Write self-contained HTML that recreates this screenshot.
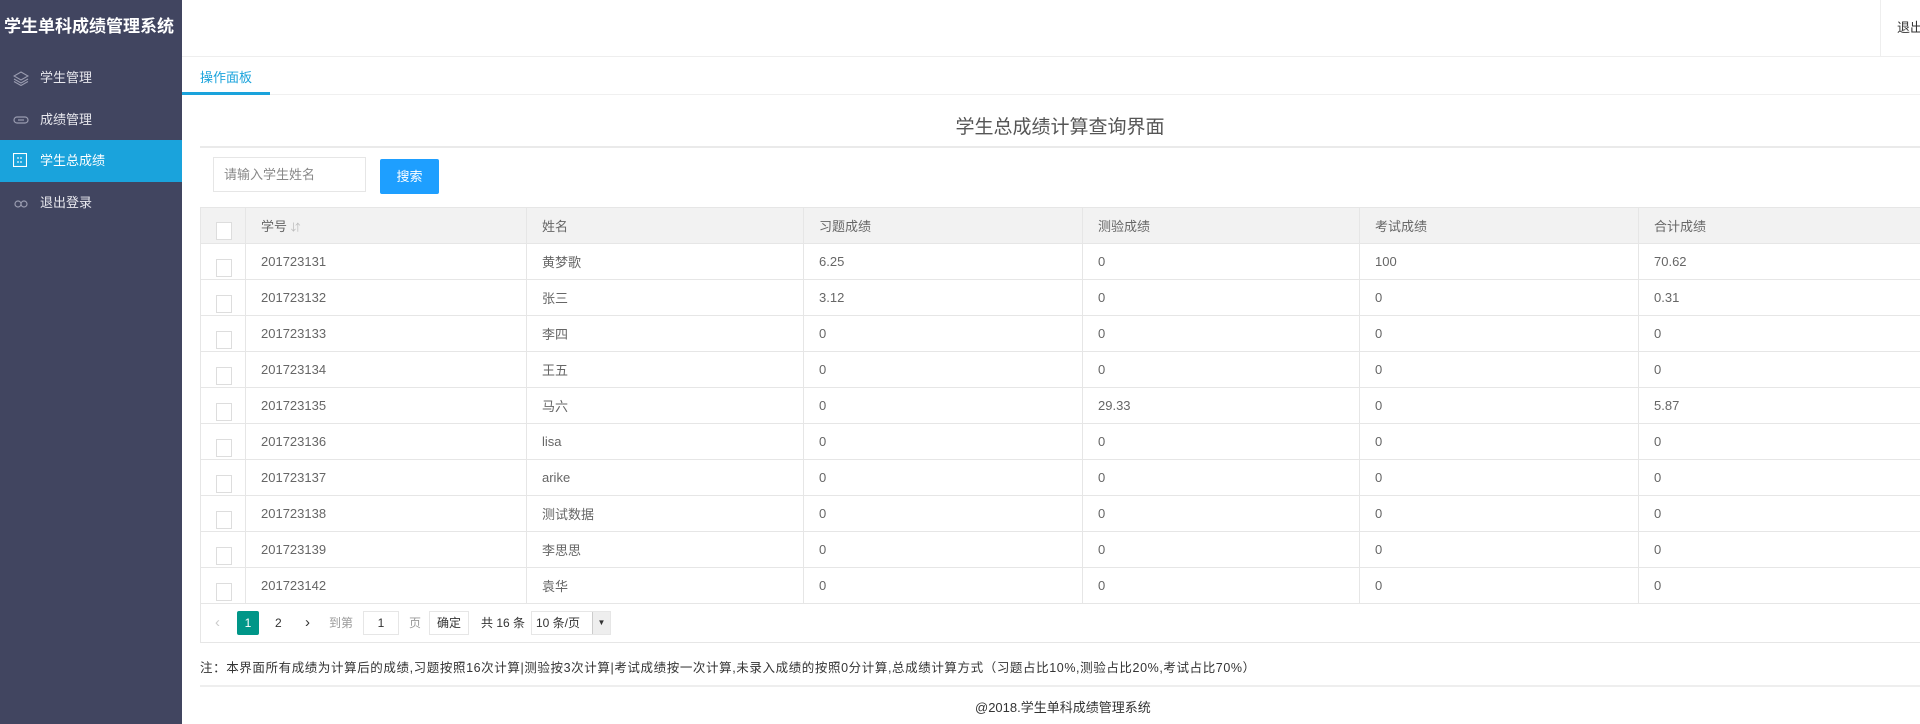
<!DOCTYPE html>
<html><head><meta charset="utf-8"><style>
*{margin:0;padding:0;box-sizing:border-box}
body{width:1920px;height:724px;overflow:hidden;background:#fff;font-family:"Liberation Sans","Noto Sans CJK SC",sans-serif;color:#666;font-size:13px;position:relative}
.side{position:absolute;left:0;top:0;width:182px;height:724px;background:#414560}
.logo{height:56px;line-height:54px;color:#fff;font-size:17px;padding-left:4px;white-space:nowrap;font-weight:bold}
.mi{position:absolute;left:0;width:182px;height:42px;line-height:42px;color:#e8e8ee;font-size:13px;padding-left:40px}
.mi svg{position:absolute;left:13px;top:13px}
.mi.act{background:#1aa3dc;color:#fff}
.head{position:absolute;left:182px;top:0;right:0;height:57px;border-bottom:1px solid #eee}
.logout{position:absolute;right:0;top:0;width:40px;height:56px;border-left:1px solid #eee;line-height:56px;padding-left:16px;color:#333;white-space:nowrap;overflow:hidden}
.tabbar{position:absolute;left:182px;top:57px;right:0;height:38px;border-bottom:1px solid #f0f0f0}
.tab{position:absolute;left:18px;top:10px;color:#1aa3dc;font-size:13px}
.tabline{position:absolute;left:0;top:35px;width:88px;height:3px;background:#1aa3dc}
.title{position:absolute;left:200px;right:0;top:112px;text-align:center;font-size:19px;color:#555}
.tline{position:absolute;left:200px;right:0;top:146px;height:2px;background:#eaeaea}
.inp{position:absolute;left:213px;top:157px;width:153px;height:35px;border:1px solid #e6e6e6;padding-left:10px;line-height:33px;color:#888}
.btn{position:absolute;left:380px;top:159px;width:59px;height:35px;background:#1e9fff;color:#fff;text-align:center;line-height:35px;border-radius:2px}
table{position:absolute;left:200px;top:207px;border-collapse:collapse;width:1740px}
td,th{border:1px solid #e6e6e6;height:36px;padding-left:15px;text-align:left;font-weight:normal;color:#666;white-space:nowrap}
th{background:#f2f2f2}
td.c,th.c{width:45px;padding:0}
.cb{display:block;width:16px;height:18px;border:1px solid #ddd;margin:13px 0 0 15px;background:#fff}
th .cb{margin-top:10px}
.pg{position:absolute;left:200px;top:603px;width:1740px;height:40px;border:1px solid #e6e6e6;border-top:0}
.pg span{position:absolute;top:10px;line-height:20px;font-size:12px;color:#333}
.note{position:absolute;left:200px;top:657px;font-size:12.5px;color:#333;white-space:nowrap;letter-spacing:0.6px}
.bline{position:absolute;left:200px;right:0;top:685px;height:2px;background:#eee}
.foot{position:absolute;left:975px;top:697px;font-size:13px;color:#333}
</style></head><body>
<div class="side">
<div class="logo">学生单科成绩管理系统</div>
<div class="mi" style="top:57px"><svg width="16" height="16" viewBox="0 0 16 16" fill="none" stroke="#9a9cb0" stroke-width="1.1"><path d="M8 2L15 6 8 10 1 6z"/><path d="M1 9l7 4 7-4"/><path d="M1 11.5l7 4 7-4"/></svg>学生管理</div>
<div class="mi" style="top:99px"><svg width="16" height="16" viewBox="0 0 16 16" fill="none" stroke="#9a9cb0" stroke-width="1.2"><rect x="1" y="5" width="14" height="6" rx="3"/><path d="M5 8h6"/></svg>成绩管理</div>
<div class="mi act" style="top:140px"><svg width="14" height="14" viewBox="0 0 14 14" fill="none" stroke="#fff" stroke-width="1.1"><rect x="0.5" y="0.5" width="13" height="13"/><path d="M5 4v2M8 4v2M5 8v2M8 8v2"/></svg>学生总成绩</div>
<div class="mi" style="top:182px"><svg width="16" height="16" viewBox="0 0 16 16" fill="none" stroke="#9a9cb0" stroke-width="1.2"><circle cx="5" cy="9" r="3"/><circle cx="11" cy="9" r="3"/></svg>退出登录</div>
</div>
<div class="head"><div class="logout">退出</div></div>
<div class="tabbar"><div class="tab">操作面板</div><div class="tabline"></div></div>
<div class="title">学生总成绩计算查询界面</div>
<div class="tline"></div>
<div class="inp">请输入学生姓名</div>
<div class="btn">搜索</div>
<table>
<tr><th class="c"><i class="cb"></i></th><th style="width:281px">学号 <span style="color:#bbb;font-size:10px">&#8693;</span></th><th style="width:277px">姓名</th><th style="width:279px">习题成绩</th><th style="width:277px">测验成绩</th><th style="width:279px">考试成绩</th><th>合计成绩</th></tr>
<tr><td class="c"><i class="cb"></i></td><td>201723131</td><td>黄梦歌</td><td>6.25</td><td>0</td><td>100</td><td>70.62</td></tr>
<tr><td class="c"><i class="cb"></i></td><td>201723132</td><td>张三</td><td>3.12</td><td>0</td><td>0</td><td>0.31</td></tr>
<tr><td class="c"><i class="cb"></i></td><td>201723133</td><td>李四</td><td>0</td><td>0</td><td>0</td><td>0</td></tr>
<tr><td class="c"><i class="cb"></i></td><td>201723134</td><td>王五</td><td>0</td><td>0</td><td>0</td><td>0</td></tr>
<tr><td class="c"><i class="cb"></i></td><td>201723135</td><td>马六</td><td>0</td><td>29.33</td><td>0</td><td>5.87</td></tr>
<tr><td class="c"><i class="cb"></i></td><td>201723136</td><td>lisa</td><td>0</td><td>0</td><td>0</td><td>0</td></tr>
<tr><td class="c"><i class="cb"></i></td><td>201723137</td><td>arike</td><td>0</td><td>0</td><td>0</td><td>0</td></tr>
<tr><td class="c"><i class="cb"></i></td><td>201723138</td><td>测试数据</td><td>0</td><td>0</td><td>0</td><td>0</td></tr>
<tr><td class="c"><i class="cb"></i></td><td>201723139</td><td>李思思</td><td>0</td><td>0</td><td>0</td><td>0</td></tr>
<tr><td class="c"><i class="cb"></i></td><td>201723142</td><td>袁华</td><td>0</td><td>0</td><td>0</td><td>0</td></tr>
</table>
<div class="pg">
<span style="left:14px;color:#ccc;font-size:15px">&#8249;</span>
<span style="left:36px;width:22px;height:24px;top:8px;line-height:24px;background:#009688;color:#fff;text-align:center;border-radius:2px">1</span>
<span style="left:74px">2</span>
<span style="left:104px;font-size:15px">&#8250;</span>
<span style="left:128px;color:#999">到第</span>
<span style="left:162px;top:8px;width:36px;height:24px;line-height:22px;border:1px solid #e6e6e6;text-align:center">1</span>
<span style="left:208px;color:#999">页</span>
<span style="left:228px;top:8px;width:40px;height:24px;line-height:22px;border:1px solid #e6e6e6;text-align:center">确定</span>
<span style="left:280px">共 16 条</span>
<span style="left:330px;top:8px;width:80px;height:24px;line-height:22px;border:1px solid #e6e6e6;padding-left:4px">10 条/页<i style="position:absolute;right:0;top:0;width:18px;height:22px;background:#eee;border-left:1px solid #ccc;font-style:normal;font-size:8px;text-align:center">&#9660;</i></span>
</div>
<div class="note">注：本界面所有成绩为计算后的成绩,习题按照16次计算|测验按3次计算|考试成绩按一次计算,未录入成绩的按照0分计算,总成绩计算方式（习题占比10%,测验占比20%,考试占比70%）</div>
<div class="bline"></div>
<div class="foot">@2018.学生单科成绩管理系统</div>
</body></html>
